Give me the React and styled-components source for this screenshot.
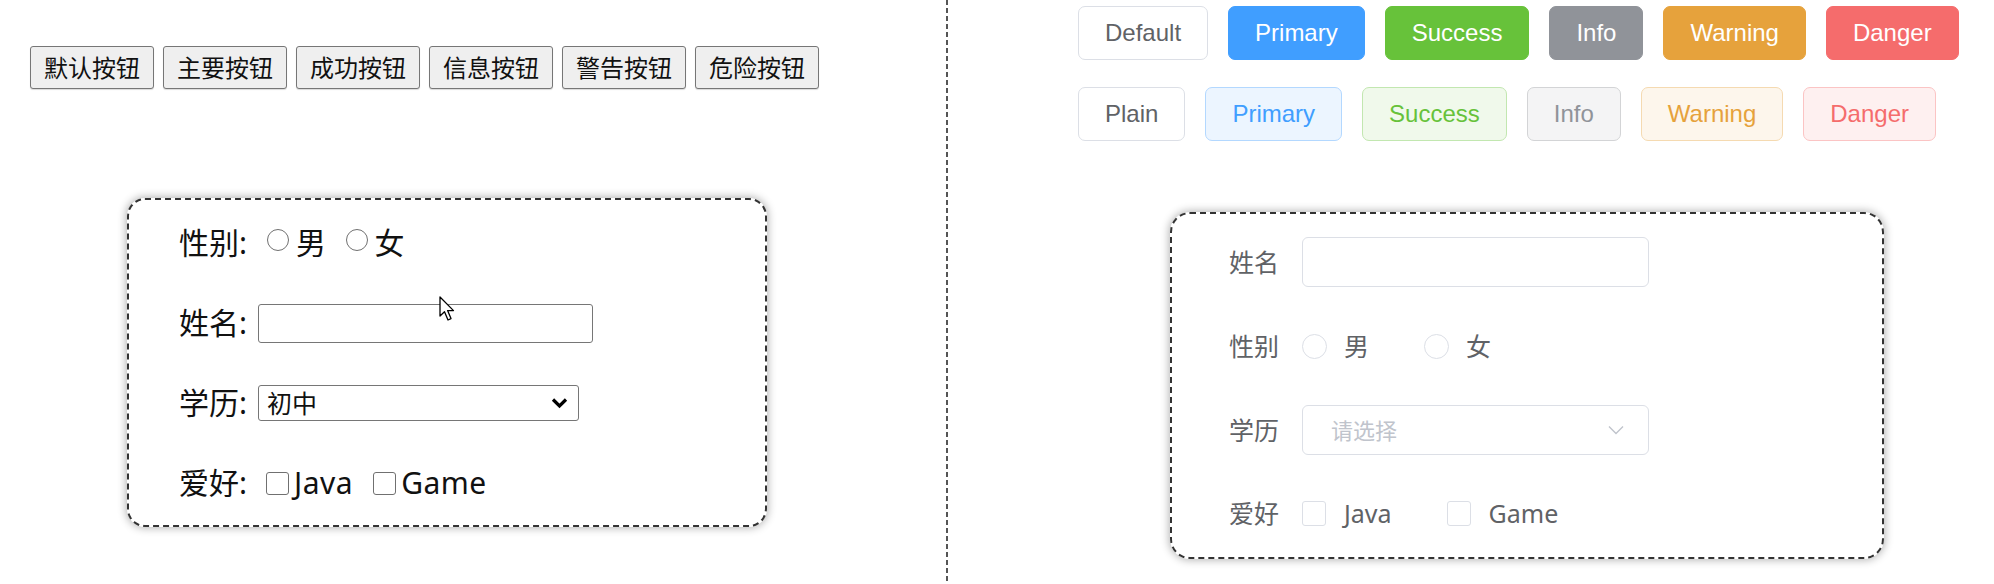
import React from 'react';
import styled, { createGlobalStyle } from 'styled-components';

const GlobalStyle = createGlobalStyle`
  html, body {
    margin: 0;
    padding: 0;
    background: #ffffff;
  }
  * {
    box-sizing: border-box;
  }
`;

const CJK = `"Noto Sans", "Noto Sans CJK SC", sans-serif`;

const plainColors = {
  default: { bg: '#ffffff', border: '#dcdfe6', color: '#606266' },
  primary: { bg: '#ecf5ff', border: '#b3d8ff', color: '#409eff' },
  success: { bg: '#f0f9eb', border: '#c2e7b0', color: '#67c23a' },
  info: { bg: '#f4f4f5', border: '#d3d4d6', color: '#909399' },
  warning: { bg: '#fdf6ec', border: '#f5dab1', color: '#e6a23c' },
  danger: { bg: '#fef0f0', border: '#fbc4c4', color: '#f56c6c' }
};

const solidColors = {
  default: { bg: '#ffffff', border: '#dcdfe6', color: '#606266' },
  primary: { bg: '#409eff', border: '#409eff', color: '#ffffff' },
  success: { bg: '#67c23a', border: '#67c23a', color: '#ffffff' },
  info: { bg: '#909399', border: '#909399', color: '#ffffff' },
  warning: { bg: '#e6a23c', border: '#e6a23c', color: '#ffffff' },
  danger: { bg: '#f56c6c', border: '#f56c6c', color: '#ffffff' }
};

const solidRow = [
  ['default', 'Default'],
  ['primary', 'Primary'],
  ['success', 'Success'],
  ['info', 'Info'],
  ['warning', 'Warning'],
  ['danger', 'Danger']
];

const plainRow = [
  ['default', 'Plain'],
  ['primary', 'Primary'],
  ['success', 'Success'],
  ['info', 'Info'],
  ['warning', 'Warning'],
  ['danger', 'Danger']
];

const nativeButtons = ['默认按钮', '主要按钮', '成功按钮', '信息按钮', '警告按钮', '危险按钮'];

export default function App() {
  return (
    <Page>
      <GlobalStyle />
      <LeftPanel>
        <NativeRow>
          {nativeButtons.map(text => (
            <NativeButton key={text}>{text}</NativeButton>
          ))}
        </NativeRow>
        <NativeForm>
          <NativeItem>
            <NativeLabel>性别:</NativeLabel>
            <NativeRadio />
            <NativeText>男</NativeText>
            <NativeRadio $spaced />
            <NativeText>女</NativeText>
          </NativeItem>
          <NativeItem>
            <NativeLabel>姓名:</NativeLabel>
            <NativeInput />
          </NativeItem>
          <NativeItem>
            <NativeLabel>学历:</NativeLabel>
            <NativeSelect>
              <span>初中</span>
              <svg width="17" height="12" viewBox="0 0 17 12">
                <path d="M2 2.5 L8.5 9 L15 2.5" fill="none" stroke="#000" strokeWidth="3.2" />
              </svg>
            </NativeSelect>
          </NativeItem>
          <NativeItem>
            <NativeLabel>爱好:</NativeLabel>
            <NativeCheck />
            <NativeText>Java</NativeText>
            <NativeCheck $spaced />
            <NativeText>Game</NativeText>
          </NativeItem>
          <Cursor width="18" height="27" viewBox="0 0 18 27">
            <path
              d="M1 1 L1 20 L5.5 15.8 L9 24 L12 22.6 L8.6 14.6 L14.5 14.6 Z"
              fill="#fff"
              stroke="#000"
              strokeWidth="1.3"
              strokeLinejoin="round"
            />
          </Cursor>
        </NativeForm>
      </LeftPanel>
      <Divider />
      <RightPanel>
        <ElRow>
          {solidRow.map(([type, text]) => (
            <ElButton key={type} $c={solidColors[type]}>{text}</ElButton>
          ))}
        </ElRow>
        <ElRow $second>
          {plainRow.map(([type, text]) => (
            <ElButton key={type} $c={plainColors[type]}>{text}</ElButton>
          ))}
        </ElRow>
        <ElForm>
          <ElItem>
            <ElLabel>姓名</ElLabel>
            <ElInput />
          </ElItem>
          <ElItem>
            <ElLabel>性别</ElLabel>
            <ElRadio />
            <ElOptText>男</ElOptText>
            <ElRadio $spaced />
            <ElOptText>女</ElOptText>
          </ElItem>
          <ElItem>
            <ElLabel>学历</ElLabel>
            <ElSelect>
              <span>请选择</span>
              <svg width="16" height="10" viewBox="0 0 16 10">
                <path d="M1 1.5 L8 8.5 L15 1.5" fill="none" stroke="#c0c4cc" strokeWidth="1.4" />
              </svg>
            </ElSelect>
          </ElItem>
          <ElItem $last>
            <ElLabel>爱好</ElLabel>
            <ElCheck />
            <ElOptText>Java</ElOptText>
            <ElCheck $spaced />
            <ElOptText>Game</ElOptText>
          </ElItem>
        </ElForm>
      </RightPanel>
    </Page>
  );
}

const Page = styled.div`
  display: flex;
  width: 1994px;
  height: 584px;
  overflow: hidden;
`;

const LeftPanel = styled.div`
  width: 946px;
  flex: 0 0 auto;
  padding: 46px 0 0 30px;
`;

const Divider = styled.div`
  width: 2px;
  flex: 0 0 auto;
  background: repeating-linear-gradient(to bottom, #555 0 5px, transparent 5px 8px);
`;

const RightPanel = styled.div`
  flex: 1 1 auto;
  padding: 6px 0 0 130px;
`;

/* left: plain browser controls */

const NativeRow = styled.div`
  display: flex;
  gap: 9px;
`;

const NativeButton = styled.button`
  width: 124px;
  height: 43px;
  padding: 0;
  font-family: ${CJK};
  font-size: 24px;
  line-height: 1;
  color: #111;
  background: #efefef;
  border: 1px solid #767676;
  border-radius: 3px;
  box-shadow: 0 1px 1px rgba(0, 0, 0, 0.15);
`;

const NativeForm = styled.div`
  position: relative;
  display: flex;
  flex-direction: column;
  gap: 40px;
  width: 640px;
  height: 329px;
  margin: 109px 0 0 97px;
  padding: 23px 0 0 50px;
  border: 2px dashed #333;
  border-radius: 18px;
  box-shadow: 0 0 8px 1px rgba(0, 0, 0, 0.3);
  font-family: ${CJK};
  font-size: 30px;
  color: #111;
`;

const NativeItem = styled.div`
  display: flex;
  align-items: center;
  height: 40px;
`;

const NativeLabel = styled.span`
  margin-right: 11px;
  line-height: 1;
`;

const NativeText = styled.span`
  line-height: 1;
  letter-spacing: 0.5px;
`;

const NativeRadio = styled.span`
  width: 22px;
  height: 22px;
  margin: -6px 7px 0 ${p => (p.$spaced ? '19px' : '9px')};
  border: 1.5px solid #707070;
  border-radius: 50%;
  background: #fff;
`;

const NativeCheck = styled.span`
  width: 23px;
  height: 23px;
  margin: 0 5px 0 ${p => (p.$spaced ? '20px' : '8px')};
  border: 1.5px solid #707070;
  border-radius: 3px;
  background: #fff;
`;

const NativeInput = styled.div`
  width: 335px;
  height: 39px;
  border: 1.5px solid #767676;
  border-radius: 3px;
  background: #fff;
`;

const NativeSelect = styled.div`
  display: flex;
  align-items: center;
  justify-content: space-between;
  width: 321px;
  height: 36px;
  padding: 0 10px 0 8px;
  border: 1.5px solid #767676;
  border-radius: 3px;
  background: #fff;
  font-size: 25px;
  line-height: 1;
`;

const Cursor = styled.svg`
  position: absolute;
  left: 310px;
  top: 96px;
`;

/* right: element-ui look */

const ElRow = styled.div`
  display: flex;
  gap: 20px;
  margin-top: ${p => (p.$second ? '27px' : '0')};
`;

const ElButton = styled.button`
  height: 54px;
  padding: 0 26px;
  font-family: "Liberation Sans", Arial, sans-serif;
  font-size: 24px;
  line-height: 1;
  color: ${p => p.$c.color};
  background: ${p => p.$c.bg};
  border: 1px solid ${p => p.$c.border};
  border-radius: 7px;
`;

const ElForm = styled.div`
  display: flex;
  flex-direction: column;
  gap: 34px;
  width: 714px;
  height: 347px;
  margin: 71px 0 0 92px;
  padding: 23px 0 0 57px;
  border: 2px dashed #333;
  border-radius: 20px;
  box-shadow: 0 0 8px 1px rgba(0, 0, 0, 0.3);
  font-family: ${CJK};
  color: #606266;
`;

const ElItem = styled.div`
  display: flex;
  align-items: center;
  height: ${p => (p.$last ? '48px' : '50px')};
`;

const ElLabel = styled.span`
  width: 73px;
  font-size: 25px;
  line-height: 1;
`;

const ElOptText = styled.span`
  font-size: 25px;
  line-height: 1;
`;

const ElInput = styled.div`
  width: 347px;
  height: 50px;
  border: 1px solid #dcdfe6;
  border-radius: 6px;
  background: #fff;
`;

const ElSelect = styled(ElInput)`
  display: flex;
  align-items: center;
  justify-content: space-between;
  padding: 0 24px 0 28px;
  font-size: 22px;
  line-height: 1;
  color: #c0c4cc;
`;

const ElRadio = styled.span`
  width: 25px;
  height: 25px;
  margin: 0 17px 0 ${p => (p.$spaced ? '55px' : '0')};
  border: 1px solid #dcdfe6;
  border-radius: 50%;
  background: #fff;
`;

const ElCheck = styled.span`
  width: 24px;
  height: 25px;
  margin: 0 18px 0 ${p => (p.$spaced ? '55px' : '0')};
  border: 1px solid #dcdfe6;
  border-radius: 3px;
  background: #fff;
`;
